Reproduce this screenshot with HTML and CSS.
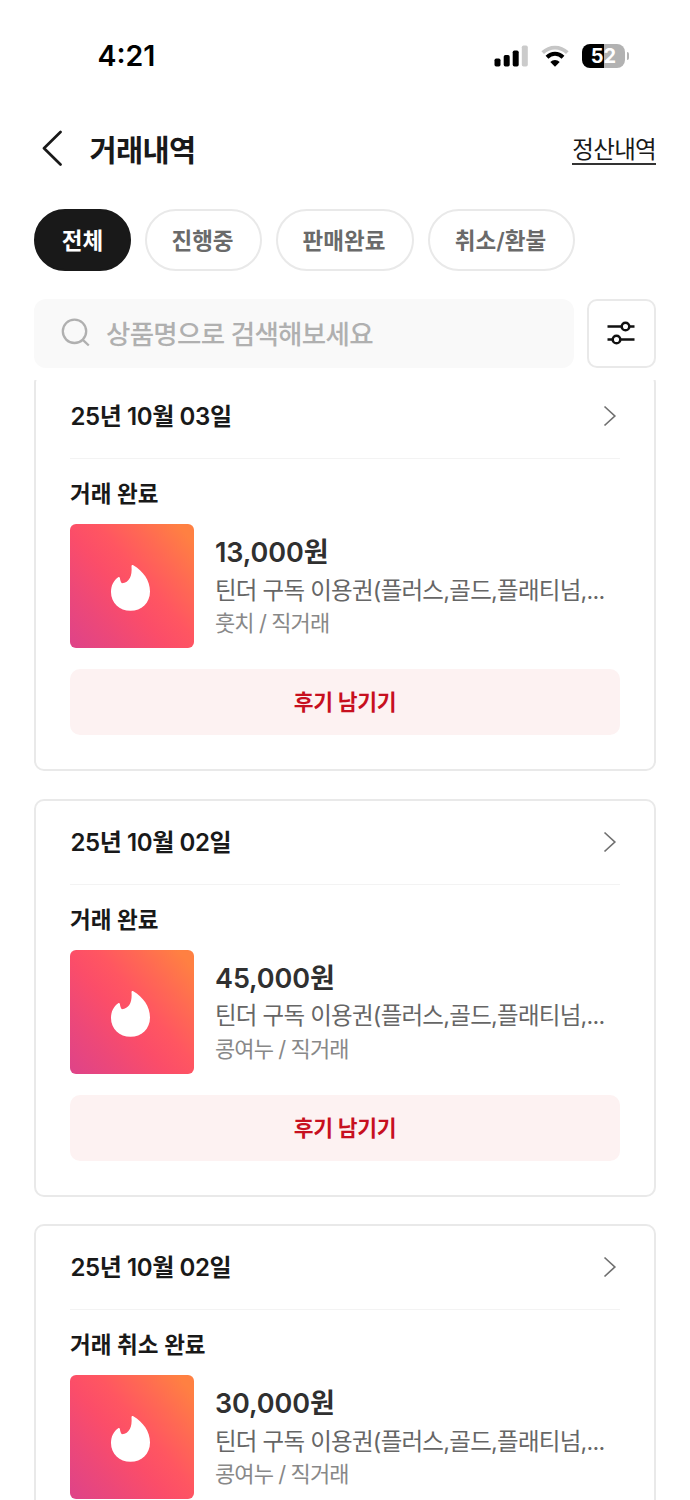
FILE: index.html
```html
<!DOCTYPE html>
<html lang="ko">
<head>
<meta charset="utf-8">
<title>거래내역</title>
<link rel="stylesheet" href="styles.css">
</head>
<body>
<svg class="defs" width="0" height="0" aria-hidden="true">
  <defs>
    <linearGradient id="warm" x1="0" y1="1" x2="1" y2="0.15">
      <stop offset="0" stop-color="#de4389"/>
      <stop offset="0.25" stop-color="#ed4878"/>
      <stop offset="0.46" stop-color="#fb4d69"/>
      <stop offset="0.62" stop-color="#ff5661"/>
      <stop offset="0.8" stop-color="#ff6953"/>
      <stop offset="1" stop-color="#ff8042"/>
    </linearGradient>
    <symbol id="flame" viewBox="0 0 124 124">
      <rect width="124" height="124" rx="6" fill="url(#warm)"/>
      <path fill="#fff" d="M61.500 42.200C61.500 41.100 62.500 40.800 63.300 41.300C73 47 80 56.500 80 67.500C80 79 71.500 86.800 60.500 86.800C49.500 86.800 41 79 41 68C41 61.500 43.600 56.400 48.200 53.200C49 52.700 49.800 53.100 49.900 54C50.200 56.600 50.900 58.300 52 59.300C59.500 58.300 62.300 52 61.500 42.200Z"/>
    </symbol>
    <symbol id="next" viewBox="0 0 14 22">
      <path d="M1.500 1.500L11.800 11L1.500 20.500" fill="none" stroke="#707070" stroke-width="1.700"/>
    </symbol>
  </defs>
</svg>
<div class="screen">
  <div class="status-bar">
    <span class="clock">4:21</span>
    <div class="indicators">
      <svg width="34" height="22" viewBox="0 0 34 22">
        <rect x="0.500" y="13.500" width="6" height="8" rx="1.700"/>
        <rect x="9.700" y="10" width="6" height="11.500" rx="1.700"/>
        <rect x="18.700" y="5.500" width="6" height="16" rx="1.700"/>
        <rect x="27.800" y="0.500" width="6" height="21" rx="1.700" fill="#cbcbcb"/>
      </svg>
      <svg width="28" height="22" viewBox="0 0 28 22">
        <path d="M1.700 7.700C8.700 .9 19.300 .9 26.300 7.700" fill="none" stroke="#c6c6c6" stroke-width="3.700"/>
        <path d="M6 12.300C10.700 7.700 17.300 7.700 22 12.300" fill="none" stroke="#000" stroke-width="4"/>
        <path d="M14 21.700L9.300 17C12 14.300 16 14.300 18.700 17Z"/>
      </svg>
      <div class="battery"><span class="battery-level">52</span><i class="battery-tip"></i></div>
    </div>
  </div>

  <header class="title-bar">
    <svg class="back" width="22" height="36" viewBox="0 0 22 36"><path d="M19.500 2L3 18.200L19.500 34.500" fill="none" stroke="#191919" stroke-width="2.700" stroke-linecap="round" stroke-linejoin="round"/></svg>
    <h1 class="title">거래내역</h1>
    <a class="settle">정산내역</a>
  </header>

  <nav class="chips">
    <span class="chip chip-all">전체</span>
    <span class="chip chip-progress">진행중</span>
    <span class="chip chip-sold">판매완료</span>
    <span class="chip chip-cancel">취소/환불</span>
  </nav>

  <div class="search-row">
    <div class="search">
      <svg width="30" height="30" viewBox="0 0 30 30" fill="none" stroke="#b0b0b0" stroke-width="2.300"><circle cx="13.500" cy="13.300" r="11.700"/><path d="M21.800 21.800L27.800 27.500"/></svg>
      <span class="placeholder">상품명으로 검색해보세요</span>
    </div>
    <div class="filter">
      <svg width="28" height="24" viewBox="0 0 28 24" fill="none" stroke="#111" stroke-width="2.500"><path d="M.5 5.500H14.500M22.500 5.500H27.500M.5 18.500H5.500M13.500 18.500H27.500"/><circle cx="18.500" cy="5.500" r="3.800"/><circle cx="9.500" cy="18.500" r="3.800"/></svg>
    </div>
  </div>

  <main class="list">
    <article class="card">
      <div class="card-head"><span class="date">25년 10월 03일</span><svg class="next" width="14" height="22"><use href="#next"/></svg></div>
      <div class="state">거래 완료</div>
      <div class="item">
        <svg class="thumb" width="124" height="124"><use href="#flame"/></svg>
        <div class="info"><div class="price">13,000원</div><div class="name">틴더 구독 이용권(플러스,골드,플래티넘,...</div><div class="seller">훗치 / 직거래</div></div>
      </div>
      <div class="review">후기 남기기</div>
    </article>
    <article class="card">
      <div class="card-head"><span class="date">25년 10월 02일</span><svg class="next" width="14" height="22"><use href="#next"/></svg></div>
      <div class="state">거래 완료</div>
      <div class="item">
        <svg class="thumb" width="124" height="124"><use href="#flame"/></svg>
        <div class="info"><div class="price">45,000원</div><div class="name">틴더 구독 이용권(플러스,골드,플래티넘,...</div><div class="seller">콩여누 / 직거래</div></div>
      </div>
      <div class="review">후기 남기기</div>
    </article>
    <article class="card">
      <div class="card-head"><span class="date">25년 10월 02일</span><svg class="next" width="14" height="22"><use href="#next"/></svg></div>
      <div class="state">거래 취소 완료</div>
      <div class="item">
        <svg class="thumb" width="124" height="124"><use href="#flame"/></svg>
        <div class="info"><div class="price">30,000원</div><div class="name">틴더 구독 이용권(플러스,골드,플래티넘,...</div><div class="seller">콩여누 / 직거래</div></div>
      </div>
    </article>
  </main>
</div>
</body>
</html>
```
FILE: styles.css
```css
* { box-sizing: border-box; }
body {
  margin: 0;
  background: #fff;
  color: #191919;
  font-family: Inter, "Noto Sans CJK KR", sans-serif;
}
svg { display: block; flex: none; }
.defs { position: absolute; }
.screen {
  width: 690px;
  height: 1500px;
  overflow: hidden;
  display: flex;
  flex-direction: column;
  white-space: nowrap;
}

.status-bar {
  flex: none;
  height: 112px;
  padding: 0 61px 0 97.5px;
  display: flex;
  align-items: center;
  justify-content: space-between;
}
.clock { font-size: 28.5px; font-weight: 600; color: #000; letter-spacing: 0; line-height: 36px; }
.indicators { display: flex; align-items: center; gap: 13px; }
.battery {
  position: relative;
  width: 43px;
  height: 24px;
  margin-right: 4px;
  border-radius: 8px;
  background: linear-gradient(90deg, #000 52%, #b2b2b2 52%);
  display: flex;
  align-items: center;
  justify-content: center;
}
.battery-level { color: #fff; font-size: 20px; font-weight: 700; letter-spacing: 0; line-height: 24px; }
.battery-tip {
  position: absolute;
  right: -4px;
  top: 8px;
  width: 2.5px;
  height: 8px;
  border-radius: 0 3px 3px 0;
  background: #b2b2b2;
}

.title-bar {
  flex: none;
  height: 74px;
  padding: 0 34px 2px 41px;
  display: flex;
  align-items: center;
}
.title { margin: 3px auto 0 26.5px; font-size: 29.5px; font-weight: 700; letter-spacing: -0.6px; line-height: 40px; }
.settle {
  margin-top: 5px;
  font-size: 23.5px;
  letter-spacing: -0.7px;
  line-height: 27px;
  border-bottom: 2px solid #333;
}

.chips { flex: none; height: 62px; margin: 23px 34px 0; display: flex; gap: 14px; }
.chip {
  height: 62px;
  border: 2px solid #e9e9e9;
  border-radius: 31px;
  padding: 0 2px 2px 0;
  display: flex;
  align-items: center;
  justify-content: center;
  font-size: 22.5px;
  font-weight: 600;
  letter-spacing: 0;
  color: #6a6a6a;
}
.chip-all { width: 97px; padding-right: 0; background: #191919; border-color: #191919; color: #fff; }
.chip-progress { width: 117px; }
.chip-sold { width: 138px; }
.chip-cancel { width: 147px; }

.search-row { flex: none; height: 69px; margin: 28px 34px 0; display: flex; gap: 13px; }
.search {
  flex: 1;
  border-radius: 12px;
  background: #f9f9f9;
  padding: 0 0 1px 27px;
  display: flex;
  align-items: center;
  gap: 15px;
}
.placeholder { margin-top: -2px; font-size: 26.5px; font-weight: 500; letter-spacing: -0.7px; color: #b0b0b0; }
.filter {
  width: 69px;
  border: 2px solid #e9e9e9;
  border-radius: 10px;
  padding: 0 2px 2px 0;
  display: flex;
  align-items: center;
  justify-content: center;
}

.list { flex: 1; margin-top: 12px; overflow: hidden; padding: 0 34px; }
.card {
  height: 398px;
  margin-bottom: 27.6px;
  padding: 0 34px;
  border: 2px solid #e9e9e9;
  border-radius: 10px;
}
.card:first-child { margin-top: -7px; }
.card-head {
  height: 84px;
  border-bottom: 1.7px solid #f3f3f3;
  display: flex;
  align-items: center;
  justify-content: space-between;
  padding: 0 3px 1px 0;
}
.date { margin: -3px 0 0 0.5px; font-size: 24px; font-weight: 600; letter-spacing: -0.4px; }
.state { margin-top: 17px; font-size: 22.5px; font-weight: 600; line-height: 36px; letter-spacing: 0; }
.item { display: flex; gap: 21px; margin-top: 12px; }
.info { padding-top: 11px; }
.price { font-size: 27px; font-weight: 600; line-height: 36px; letter-spacing: -0.1px; color: #303030; }
.name { font-size: 23.5px; line-height: 36px; letter-spacing: -0.75px; color: #666; margin-top: 1.5px; }
.seller { font-size: 22px; line-height: 32px; letter-spacing: -0.9px; color: #888; margin-top: -1.5px; }
.review {
  margin-top: 21px;
  height: 66px;
  border-radius: 10px;
  background: #fdf2f2;
  color: #c7101f;
  font-size: 21.5px;
  font-weight: 600;
  letter-spacing: -0.3px;
  line-height: 66px;
  text-align: center;
}
```
